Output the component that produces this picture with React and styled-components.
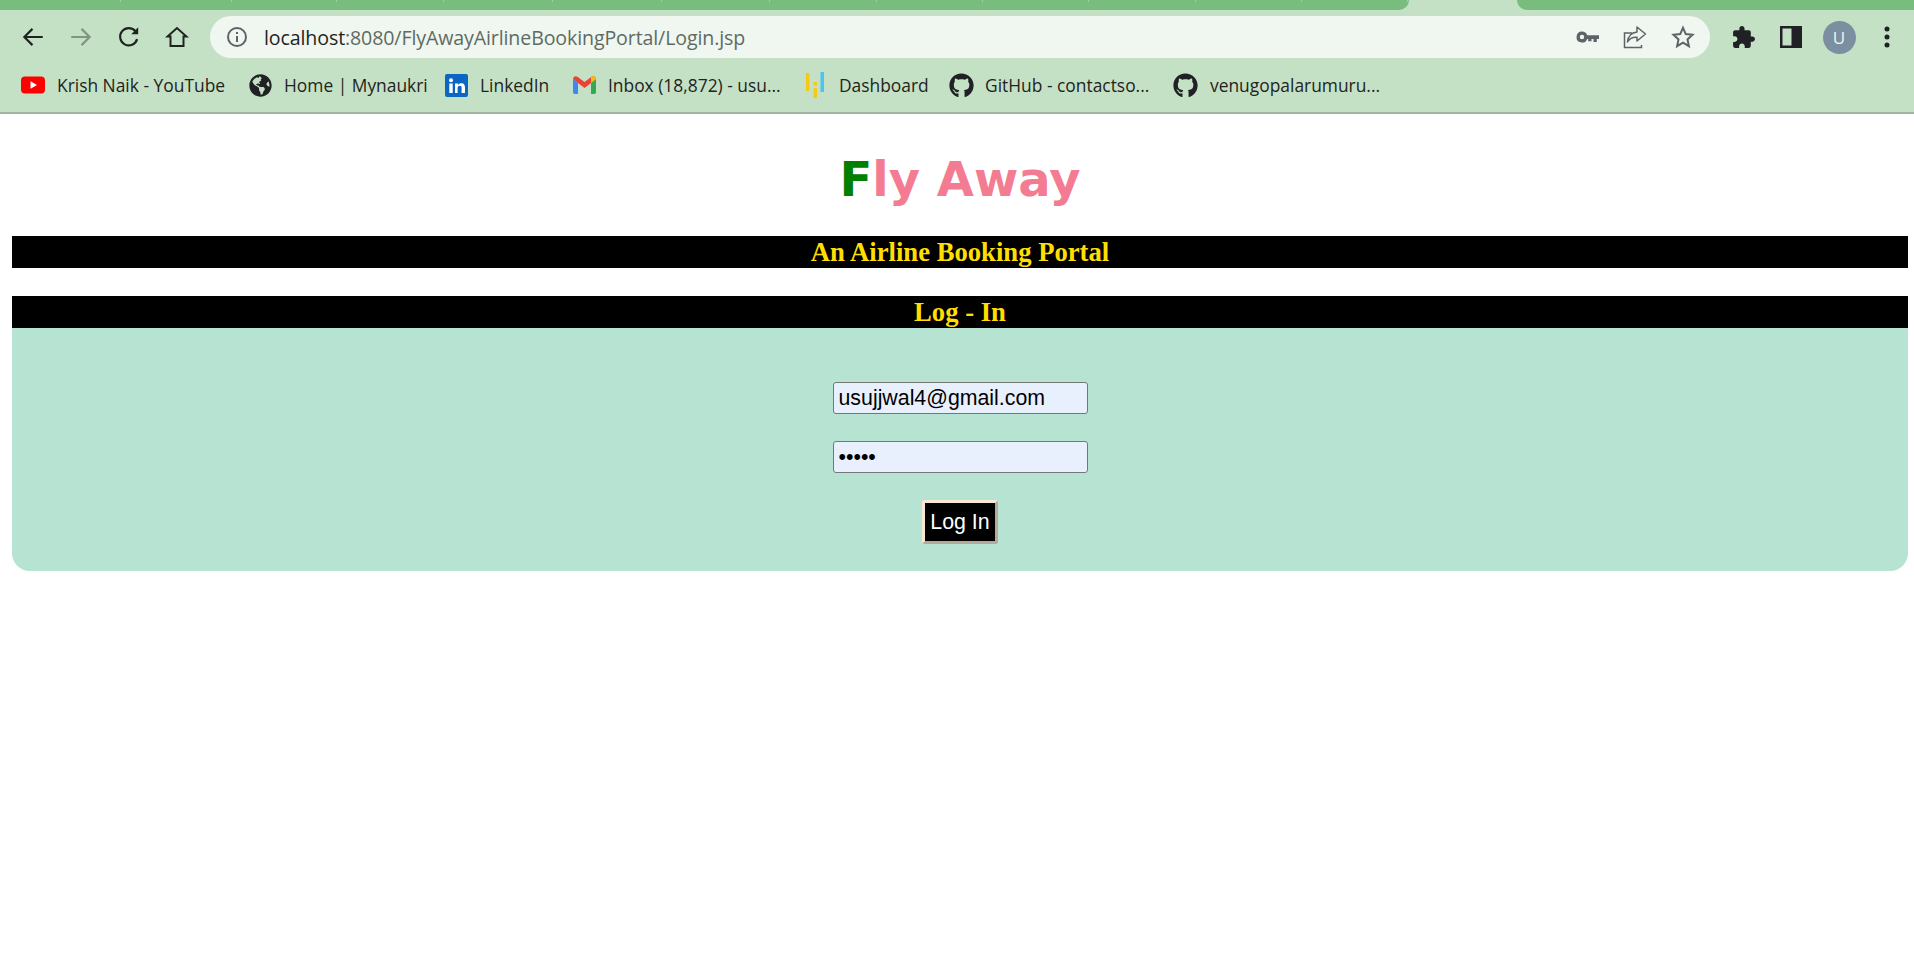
import React from "react";
import styled, { createGlobalStyle } from "styled-components";
import { FaGithub, FaGlobeAmericas } from "react-icons/fa";

const GlobalStyle = createGlobalStyle`
  html, body {
    margin: 0;
    padding: 0;
    background: #fff;
    overflow: hidden;
  }
`;

const Browser = styled.div`
  display: flex;
  flex-direction: column;
  height: 964px;
`;

const Chrome = styled.header`
  background: #c5e1c5;
  border-bottom: 2px solid #9fb5a0;
  font-family: "Open Sans", "Noto Sans", sans-serif;
`;

const TabStrip = styled.div`
  display: flex;
  justify-content: space-between;
  height: 10px;
`;

const TabGroup = styled.div`
  display: flex;
  background: #78bc7e;
  width: ${(p) => p.$width}px;
  border-radius: ${(p) => (p.$right ? "0 0 0 14px" : "0 0 14px 0")};
  overflow: hidden;
`;

const TabTick = styled.span`
  width: ${(p) => p.$width}px;
  height: 2px;
  border-right: 1px solid #a9c9a9;
  box-sizing: border-box;
`;

const Toolbar = styled.div`
  display: flex;
  align-items: center;
  height: 42px;
  margin-top: 6px;
  padding-left: 9px;
`;

const NavButton = styled.span`
  display: flex;
  align-items: center;
  justify-content: center;
  width: 48px;
  height: 42px;
  flex: none;
`;

const Omnibox = styled.div`
  display: flex;
  align-items: center;
  width: 1500px;
  height: 42px;
  margin-left: 9px;
  margin-right: 9px;
  padding: 0 3px 0 3px;
  box-sizing: border-box;
  background: #eff7f0;
  border-radius: 21px;
  flex: none;
`;

const UrlIcon = styled.span`
  display: flex;
  align-items: center;
  justify-content: center;
  width: 48px;
  height: 42px;
  flex: none;
`;

const Url = styled.div`
  flex: 1;
  font-size: 19.6px;
  letter-spacing: -0.12px;
  color: #5f6b62;
  white-space: nowrap;
  padding-left: 3px;
  strong {
    font-weight: 400;
    color: #1f2421;
  }
`;

const Avatar = styled.span`
  width: 33px;
  height: 33px;
  border-radius: 50%;
  background: #7b8fa0;
  color: #eef3f5;
  display: flex;
  align-items: center;
  justify-content: center;
  font-size: 17px;
`;

const BookmarkBar = styled.nav`
  display: flex;
  align-items: center;
  height: 54px;
  padding-left: 21px;
`;

const Bookmark = styled.a`
  display: flex;
  align-items: center;
  gap: ${(p) => p.$gap || 12}px;
  width: ${(p) => p.$width}px;
  flex: none;
  font-size: 17.4px;
  color: #1f2421;
  white-space: nowrap;
  svg {
    flex: none;
  }
`;

const Page = styled.main`
  flex: 1;
  background: #fff;
  padding: 0 6px 0 12px;
`;

const Title = styled.h1`
  margin: 0;
  padding: 32px 0 24px;
  font: bold 48px/66px "DejaVu Sans", Verdana, sans-serif;
  color: #f47c92;
  text-align: center;
  span {
    color: #008000;
  }
`;

const Banner = styled.h2`
  margin: 0 0 ${(p) => p.$gap || 0}px;
  height: 32px;
  background: #000;
  color: #ffde00;
  font: bold 26.67px/32px "Liberation Serif", "Times New Roman", serif;
  text-align: center;
`;

const LoginPanel = styled.form`
  display: flex;
  flex-direction: column;
  align-items: center;
  height: 243px;
  padding-top: 54px;
  box-sizing: border-box;
  background: #b7e3d3;
  border-radius: 0 0 18px 18px;
`;

const Field = styled.input`
  width: 255px;
  height: 32px;
  margin-bottom: 27px;
  padding: 0 4px 0 5px;
  box-sizing: border-box;
  background: #e8f0fe;
  border: 1px solid #767676;
  border-radius: 3px;
  color: #000;
  font: 21.33px "Liberation Sans", Arial, sans-serif;
  outline: none;
`;

const Submit = styled.button`
  width: 76px;
  height: 44px;
  padding: 0;
  background: #000;
  color: #fff;
  border: 3px solid;
  border-color: #f8e7d2 #b5aa9a #b5aa9a #f8e7d2;
  border-radius: 3px;
  font: 21.33px "Liberation Sans", Arial, sans-serif;
`;

const Stroke = ({ children, color = "#1f2421", size = 24, width = 2 }) => (
  <svg width={size} height={size} viewBox="0 0 24 24" fill="none" stroke={color} strokeWidth={width}>
    {children}
  </svg>
);

const YouTubeIcon = () => (
  <svg width="24" height="18" viewBox="0 0 24 18">
    <rect width="24" height="17" y="0.5" rx="4" fill="#f00" />
    <path d="M9.5 5.2v7.6l6.5-3.8z" fill="#fff" />
  </svg>
);

const LinkedInIcon = () => (
  <svg width="23" height="23" viewBox="0 0 23 23">
    <rect width="23" height="23" rx="2" fill="#0a66c2" />
    <circle cx="6" cy="6.2" r="2" fill="#fff" />
    <path d="M4.3 9.5h3.4V19H4.3zM10 9.5h3.2v1.4c.7-1 1.8-1.7 3.2-1.7 2.8 0 3.6 1.9 3.6 4.5V19h-3.4v-5c0-1.4-.4-2.2-1.6-2.2-1.3 0-2.4.8-2.4 2.4V19H10z" fill="#fff" />
  </svg>
);

const GmailIcon = () => (
  <svg width="23" height="18" viewBox="0 0 23 18">
    <path d="M0 3v13c0 1 .7 2 1.8 2H5V7z" fill="#4285f4" />
    <path d="M18 7v11h3.2c1.1 0 1.8-1 1.8-2V3z" fill="#34a853" />
    <path d="M0 3c0-2.400 2.600-3.600 4.500-2.200L11.500 6l7-5.200C20.400-.6 23 .6 23 3l-5 4-6.500 5L5 7z" fill="#ea4335" />
    <path d="M18 7l5-4c0-2.400-2.600-3.600-4.500-2.200L18 1.200z" fill="#fbbc04" />
  </svg>
);

const DashboardIcon = () => (
  <svg width="18" height="26" viewBox="0 0 18 26">
    <rect x="0" y="1" width="3.500" height="18" fill="#f7c915" />
    <rect x="7.500" y="10" width="3.500" height="3.500" fill="#f7c915" />
    <rect x="7.500" y="16" width="3.500" height="10" fill="#f7c915" />
    <rect x="14.500" y="0" width="3.500" height="20" fill="#4fc3f0" />
  </svg>
);

const tabWidths = [121, 111, 105, 107, 109, 109, 108, 107, 106, 106, 107, 106, 106];
const rightTicks = [];

const App = () => {
  return (
    <Browser>
      <GlobalStyle />
      <Chrome>
        <TabStrip>
          <TabGroup $width={1409}>
            {tabWidths.map((w, i) => (
              <TabTick key={i} $width={w} />
            ))}
          </TabGroup>
          <TabGroup $width={397} $right>
            {rightTicks.map((w, i) => (
              <TabTick key={i} $width={w} />
            ))}
          </TabGroup>
        </TabStrip>
        <Toolbar>
          <NavButton>
            <Stroke size={26}>
              <path d="M21 12H4M11.500 4.500 4 12l7.500 7.500" />
            </Stroke>
          </NavButton>
          <NavButton>
            <Stroke size={26} color="#7f9481">
              <path d="M3 12h17M12.500 4.500 20 12l-7.500 7.500" />
            </Stroke>
          </NavButton>
          <NavButton>
            <Stroke size={26}>
              <path d="M19.500 14a8 8 0 1 1-1.400-7.200" />
              <path d="M20.500 3v6.500H14z" fill="#1f2421" stroke="none" />
            </Stroke>
          </NavButton>
          <NavButton>
            <Stroke size={24}>
              <path d="M2.500 11.500 12 3l9.500 8.500H18.500V21h-13v-9.500z" strokeLinejoin="miter" />
            </Stroke>
          </NavButton>
          <Omnibox>
            <UrlIcon>
              <Stroke size={24} color="#5f6368">
                <circle cx="12" cy="12" r="9" />
                <path d="M12 11v6M12 7v2" />
              </Stroke>
            </UrlIcon>
            <Url>
              <strong>localhost</strong>:8080/FlyAwayAirlineBookingPortal/Login.jsp
            </Url>
            <UrlIcon>
              <svg width="24" height="24" viewBox="0 0 24 24" fill="#5f6368">
                <path fillRule="evenodd" d="M7 6.500a5.500 5.500 0 0 1 5.200 3.700H24v3.700h-2.200v3h-3.300v-3h-2v2.300h-3.300v-2.300h-1a5.500 5.500 0 1 1-5.200-7.400zm0 3.300a2.200 2.200 0 1 0 0 4.400 2.200 2.200 0 0 0 0-4.400z" />
              </svg>
            </UrlIcon>
            <UrlIcon>
              <Stroke size={24} color="#5f6368" width={1.500}>
                <path d="M9 8H1.500v14.500h17V20" />
                <path d="M14 2l8.500 7-8.500 7v-3.700c-4.500-.3-7.500 1.200-9.500 4.700.5-5.500 4-9.500 9.500-10.100z" strokeLinejoin="round" />
              </Stroke>
            </UrlIcon>
            <UrlIcon>
              <Stroke size={24} color="#5f6368">
                <path d="M12 2.800l2.800 6.300 6.700.7-5 4.600 1.400 6.800-5.900-3.500-5.900 3.500 1.400-6.800-5-4.600 6.700-.7z" strokeLinejoin="miter" />
              </Stroke>
            </UrlIcon>
          </Omnibox>
          <NavButton>
            <svg width="25" height="25" viewBox="0 0 24 24" fill="#1f2124">
              <path d="M20.500 11H19V7c0-1.100-.9-2-2-2h-4V3.500C13 2.120 11.880 1 10.500 1S8 2.120 8 3.500V5H4c-1.100 0-1.990.9-1.990 2v3.800H3.500c1.490 0 2.700 1.210 2.700 2.700s-1.210 2.700-2.700 2.700H2V20c0 1.100.9 2 2 2h3.800v-1.500c0-1.490 1.210-2.700 2.700-2.700 1.490 0 2.700 1.210 2.700 2.700V22H17c1.100 0 2-.9 2-2v-4h1.500c1.380 0 2.500-1.120 2.500-2.500S21.880 11 20.500 11z" />
            </svg>
          </NavButton>
          <NavButton>
            <svg width="22" height="22" viewBox="0 0 22 22">
              <path fillRule="evenodd" fill="#1f2124" d="M0 0h22v22H0zM2.500 2.500v17h9v-17z" />
            </svg>
          </NavButton>
          <NavButton>
            <Avatar>U</Avatar>
          </NavButton>
          <NavButton>
            <svg width="6" height="22" viewBox="0 0 6 22" fill="#1f2124">
              <circle cx="3" cy="3" r="2.500" />
              <circle cx="3" cy="11" r="2.500" />
              <circle cx="3" cy="19" r="2.500" />
            </svg>
          </NavButton>
        </Toolbar>
        <BookmarkBar>
          <Bookmark $width={228}>
            <YouTubeIcon />
            Krish Naik - YouTube
          </Bookmark>
          <Bookmark $width={196}>
            <FaGlobeAmericas size={23} color="#202124" />
            Home | Mynaukri
          </Bookmark>
          <Bookmark $width={128}>
            <LinkedInIcon />
            LinkedIn
          </Bookmark>
          <Bookmark $width={233}>
            <GmailIcon />
            Inbox (18,872) - usu...
          </Bookmark>
          <Bookmark $width={143} $gap={15}>
            <DashboardIcon />
            Dashboard
          </Bookmark>
          <Bookmark $width={224} $gap={11}>
            <FaGithub size={25} color="#202124" />
            GitHub - contactso...
          </Bookmark>
          <Bookmark $gap={12}>
            <FaGithub size={25} color="#202124" />
            venugopalarumuru...
          </Bookmark>
        </BookmarkBar>
      </Chrome>
      <Page>
        <Title>
          <span>F</span>ly Away
        </Title>
        <Banner $gap={28}>An Airline Booking Portal</Banner>
        <Banner>Log - In</Banner>
        <LoginPanel onSubmit={(e) => e.preventDefault()}>
          <Field type="text" defaultValue="usujjwal4@gmail.com" readOnly />
          <Field type="password" defaultValue="admin" readOnly />
          <Submit type="submit">Log In</Submit>
        </LoginPanel>
      </Page>
    </Browser>
  );
};

export default App;
